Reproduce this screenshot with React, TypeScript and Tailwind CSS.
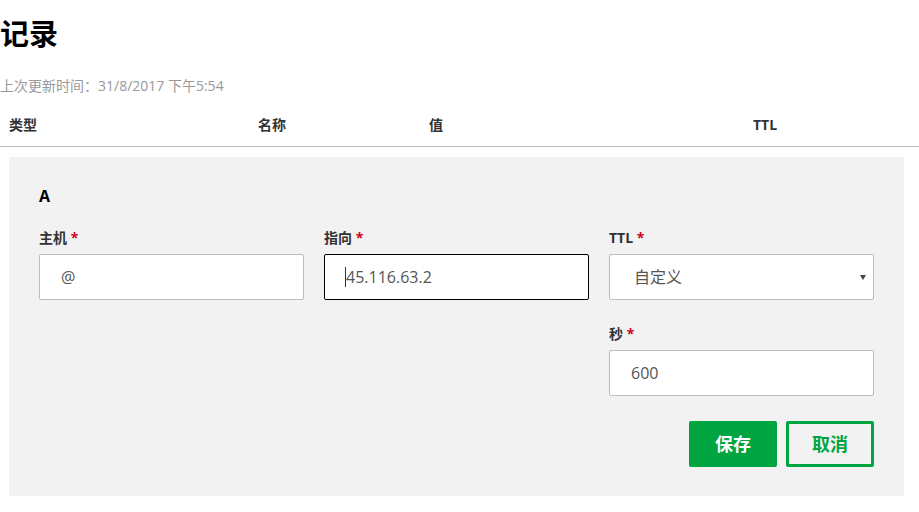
const font = { fontFamily: '"Open Sans", "Noto Sans CJK SC", sans-serif' }

function Label({ text }: { text: string }) {
  return (
    <div className="h-[20px] mb-[6px] text-[14px] font-bold text-[#333] leading-[20px]">
      {text} <span className="text-[#d0021b]">*</span>
    </div>
  )
}

export default function App() {
  return (
    <div className="w-[919px] h-[512px] bg-white text-[#222] overflow-hidden" style={font}>
      <h1 className="pt-[14px] h-[56px] text-[29px] font-bold leading-[40px] text-black">记录</h1>
      <div className="mt-[19px] text-[14px] text-[#999] leading-[22px]">上次更新时间：31/8/2017 下午5:54</div>

      {/* Table header */}
      <div className="mt-[18px] grid grid-cols-[249px_171px_324px_1fr] pl-[9px] h-[32px] items-start text-[14px] font-bold text-[#333] leading-[20px] border-b border-[#bdbdbd]">
        <span>类型</span>
        <span>名称</span>
        <span>值</span>
        <span>TTL</span>
      </div>

      {/* Edit panel */}
      <div className="ml-[9px] mt-[10px] w-[895px] h-[339px] bg-[#f2f2f2] pl-[30px] pr-[30px] pt-[27px]">
        <div className="text-[16px] font-bold text-black leading-[24px]">A</div>

        <div className="mt-[20px] grid grid-cols-[265px_265px_265px] gap-x-[20px]">
          <div>
            <Label text="主机" />
            <div className="h-[46px] bg-white border border-[#bdbdbd] rounded-[2px] pl-[21px] flex items-center text-[16px] text-[#555]">
              @
            </div>
          </div>
          <div>
            <Label text="指向" />
            <div className="h-[46px] bg-white border border-black rounded-[2px] pl-[20px] flex items-center text-[16px] text-[#555]">
              <span className="w-px h-[20px] bg-[#333]" />
              <span>45.116.63.2</span>
            </div>
          </div>
          <div>
            <Label text="TTL" />
            <div className="h-[46px] bg-white border border-[#bdbdbd] rounded-[2px] pl-[24px] pr-[7px] flex items-center justify-between text-[16px] text-[#555]">
              <span>自定义</span>
              <svg width="6" height="5" viewBox="0 0 6 5" className="fill-[#444]">
                <path d="M0 0h6L3 5z" />
              </svg>
            </div>
          </div>
        </div>

        <div className="mt-[24px] grid grid-cols-[265px_265px_265px] gap-x-[20px]">
          <div className="col-start-3">
            <Label text="秒" />
            <div className="h-[46px] bg-white border border-[#bdbdbd] rounded-[2px] pl-[21px] flex items-center text-[16px] text-[#555]">
              600
            </div>
          </div>
        </div>

        <div className="mt-[25px] flex justify-end gap-[9px]">
          <button className="w-[88px] h-[46px] rounded-[2px] bg-[#00a541] text-white text-[18px] font-bold">保存</button>
          <button className="w-[88px] h-[46px] rounded-[2px] border-[3px] border-[#00a541] text-[#00a541] text-[18px] font-bold bg-transparent">
            取消
          </button>
        </div>
      </div>
    </div>
  )
}
